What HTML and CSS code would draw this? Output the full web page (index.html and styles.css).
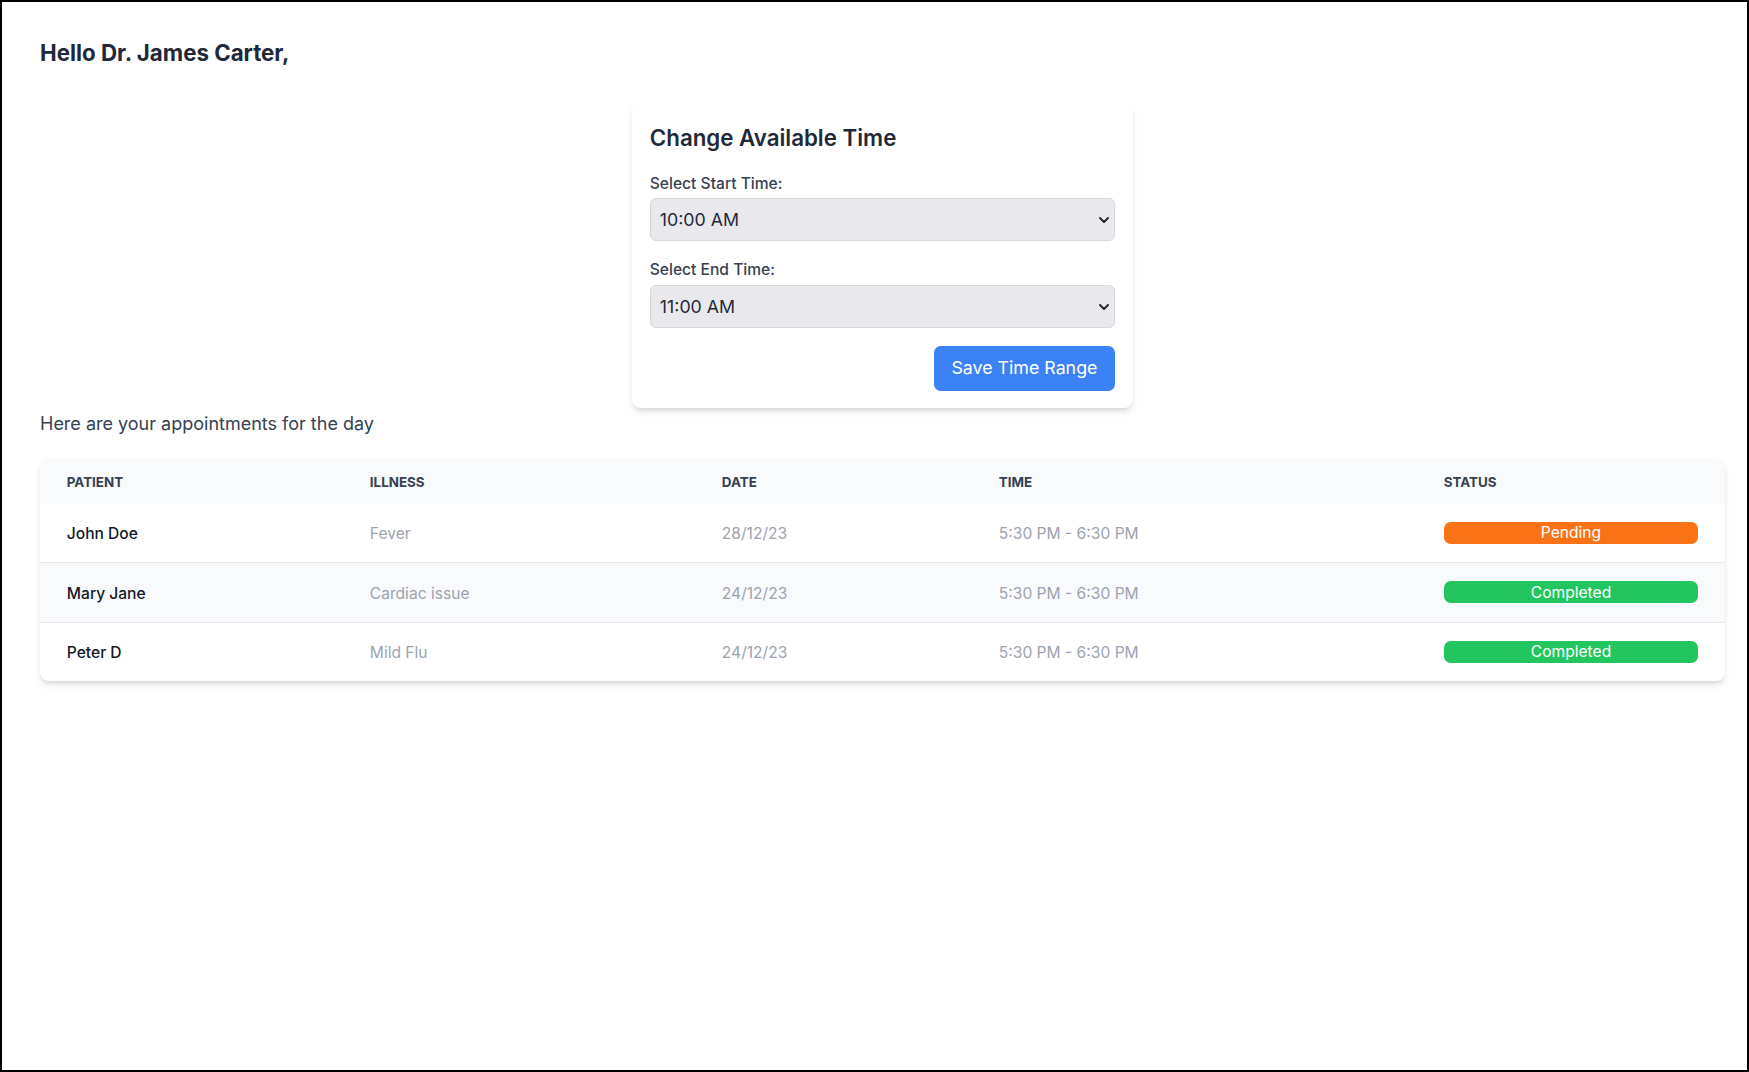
FILE: index.html
```html
<!DOCTYPE html>
<html lang="en">
<head>
<meta charset="utf-8">
<title>Doctor Dashboard</title>
<link rel="stylesheet" href="styles.css">
</head>
<body>
<div class="frame">
  <main class="page">
    <h1 class="greeting">Hello Dr. James Carter,</h1>

    <section class="card">
      <h2 class="card-title">Change Available Time</h2>
      <div class="field">
        <label class="field-label" for="start">Select Start Time:</label>
        <div class="select-wrap">
          <select id="start" class="select">
            <option>10:00 AM</option>
          </select>
          <svg class="chevron" viewBox="0 0 10 6" width="10" height="6" aria-hidden="true"><path d="M1 1l4 4 4-4" fill="none" stroke="#222" stroke-width="1.8" stroke-linecap="round" stroke-linejoin="round"/></svg>
        </div>
      </div>
      <div class="field">
        <label class="field-label" for="end">Select End Time:</label>
        <div class="select-wrap">
          <select id="end" class="select">
            <option>11:00 AM</option>
          </select>
          <svg class="chevron" viewBox="0 0 10 6" width="10" height="6" aria-hidden="true"><path d="M1 1l4 4 4-4" fill="none" stroke="#222" stroke-width="1.8" stroke-linecap="round" stroke-linejoin="round"/></svg>
        </div>
      </div>
      <div class="actions">
        <button class="btn" type="button">Save Time Range</button>
      </div>
    </section>

    <p class="intro">Here are your appointments for the day</p>

    <div class="table-card">
      <table class="appts">
        <colgroup>
          <col class="c-patient"><col class="c-illness"><col class="c-date"><col class="c-time"><col class="c-status">
        </colgroup>
        <thead>
          <tr><th>Patient</th><th>Illness</th><th>Date</th><th>Time</th><th>Status</th></tr>
        </thead>
        <tbody>
          <tr>
            <td class="name">John Doe</td><td class="muted">Fever</td><td class="muted">28/12/23</td><td class="muted">5:30 PM - 6:30 PM</td>
            <td class="badge-cell"><span class="badge pending">Pending</span></td>
          </tr>
          <tr class="alt">
            <td class="name">Mary Jane</td><td class="muted">Cardiac issue</td><td class="muted">24/12/23</td><td class="muted">5:30 PM - 6:30 PM</td>
            <td class="badge-cell"><span class="badge done">Completed</span></td>
          </tr>
          <tr>
            <td class="name">Peter D</td><td class="muted">Mild Flu</td><td class="muted">24/12/23</td><td class="muted">5:30 PM - 6:30 PM</td>
            <td class="badge-cell"><span class="badge done">Completed</span></td>
          </tr>
        </tbody>
      </table>
    </div>
  </main>
</div>
</body>
</html>
```

FILE: styles.css
```css
* { box-sizing: border-box; }
html, body { margin: 0; padding: 0; background: #fff; }
body {
  font-family: Inter, "Noto Sans", "Liberation Sans", sans-serif;
  color: #1f2937;
}
.frame {
  width: 1749px;
  height: 1072px;
  border: 2px solid #000;
  overflow: hidden;
}
.page {
  padding: 35px 22px 0 38px;
}
.greeting {
  margin: 0 0 34.7px;
  font-size: 22.3px;
  line-height: 31.2px;
  font-weight: 700;
  color: #1e293b;
}
.card {
  width: 501px;
  margin: 0 auto;
  padding: 18.8px 17.8px 17.8px;
  background: #fff;
  border-radius: 8.9px;
  box-shadow: 0 4.5px 7px -1px rgba(0,0,0,0.1), 0 2.2px 4.5px -2px rgba(0,0,0,0.1);
}
.card-title {
  margin: 0 0 20px;
  font-size: 22.3px;
  line-height: 31.2px;
  font-weight: 600;
  color: #1f2937;
}
.field { margin-bottom: 17.8px; }
.field-label {
  display: block;
  margin-bottom: 3px;
  font-size: 15.6px;
  line-height: 22.3px;
  font-weight: 500;
  color: #374151;
}
.field + .field .field-label { margin-bottom: 4px; }
.select-wrap { position: relative; }
.select {
  display: block;
  width: 100%;
  height: 43px;
  padding: 0 28px 0 9px;
  font-family: inherit;
  font-size: 17.8px;
  color: #1f2937;
  background: #e9e9ed;
  border: 1px solid #d6d6db;
  border-radius: 6px;
  appearance: none;
  -webkit-appearance: none;
  outline: none;
}
.chevron {
  position: absolute;
  right: 6px;
  top: 50%;
  margin-top: -3px;
  pointer-events: none;
}
.actions {
  display: flex;
  justify-content: flex-end;
}
.btn {
  height: 44.6px;
  padding: 0 17.8px;
  font-family: inherit;
  font-size: 17.8px;
  line-height: 26.8px;
  color: #fff;
  background: #3b82f6;
  border: 0;
  border-radius: 6.7px;
}
.intro {
  margin: 2.5px 0 21.2px;
  font-size: 18px;
  line-height: 26.8px;
  color: #374151;
}
.table-card {
  border-radius: 8.9px;
  overflow: hidden;
  box-shadow: 0 4.5px 7px -1px rgba(0,0,0,0.1), 0 2.2px 4.5px -2px rgba(0,0,0,0.1);
  background: #fff;
}
.appts {
  width: 100%;
  border-collapse: collapse;
  table-layout: fixed;
}
.c-patient { width: 303px; }
.c-illness { width: 352px; }
.c-date { width: 277px; }
.c-time { width: 445px; }
.c-status { width: 308px; }
.appts thead tr { background: #f9fafb; }
.appts th {
  padding: 15.4px 26.8px 11.4px;
  text-align: left;
  font-size: 13.4px;
  line-height: 17.8px;
  font-weight: 700;
  text-transform: uppercase;
  color: #374151;
}
.appts td {
  padding: 19.6px 26.8px 16.6px;
  font-size: 15.6px;
  line-height: 22.3px;
  white-space: nowrap;
}
.appts td.badge-cell { padding-top: 18.1px; padding-bottom: 18.1px; }
.appts tbody tr + tr { border-top: 1px solid #e5e7eb; }
.appts tbody tr.alt { background: #f9fafb; }
.name { font-weight: 500; color: #111827; }
.muted { color: #9ca3af; }
.badge {
  display: block;
  padding-top: 1.5px;
  text-align: center;
  color: #fff;
  border-radius: 6.7px;
  font-size: 15.6px;
  line-height: 20.8px;
}
.pending { background: #f97316; }
.done { background: #22c55e; }
```
